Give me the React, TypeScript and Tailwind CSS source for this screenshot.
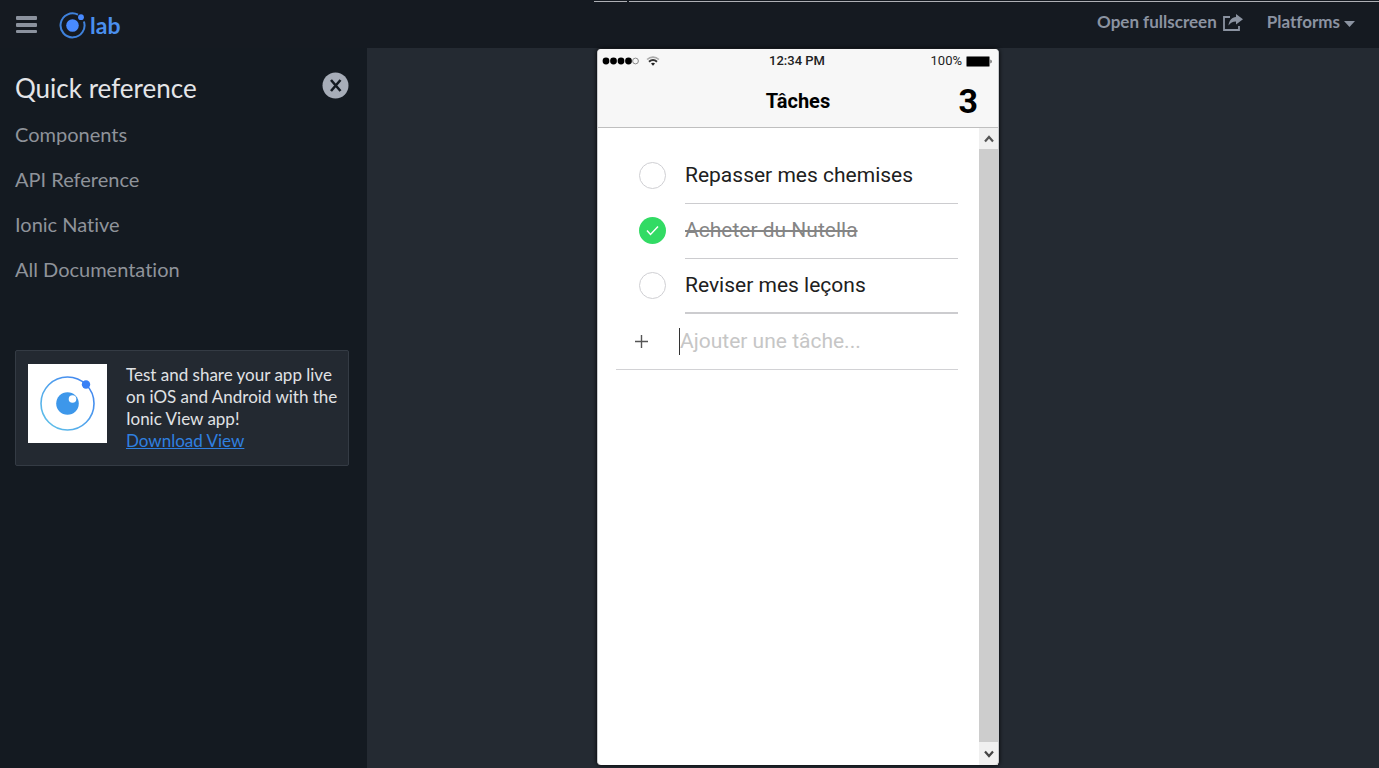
import { useState } from "react";

const links = ["Components", "API Reference", "Ionic Native", "All Documentation"];

const initialTasks = [
  { id: 1, name: "Repasser mes chemises", done: false },
  { id: 2, name: "Acheter du Nutella", done: true },
  { id: 3, name: "Reviser mes leçons", done: false },
];

function TopBar() {
  return (
    <header className="flex h-12 shrink-0 flex-col bg-[#151a21]">
      <div className="flex h-0.5 w-full shrink-0 items-end gap-0.5 pl-[43.1%]">
        <span className="h-px w-[33px] bg-[#aeb0b5]" />
        <span className="h-px flex-1 bg-[#aeb0b5]" />
      </div>
      <div className="flex flex-1 items-center pr-6 pl-4">
        <button type="button" aria-label="Menu" className="mr-[22px]">
          <svg width="21" height="18" viewBox="0 0 21 18" fill="#8b929e" className="block">
            <rect width="21" height="4" rx="1" />
            <rect y="7" width="21" height="4" rx="1" />
            <rect y="14" width="21" height="3" rx="1" />
          </svg>
        </button>
        <a href="#lab" className="flex items-center gap-1 text-[#4a8fee]">
          <svg width="27" height="27" viewBox="0 0 27 27" className="block">
            <path
              d="M19 2.700A12 12 0 1 0 24.900 9.500"
              fill="none"
              stroke="#3f82dc"
              strokeWidth="2"
            />
            <circle cx="13.5" cy="13.5" r="6.3" fill="#488aff" />
            <circle cx="22" cy="5.2" r="2.9" fill="#488aff" />
          </svg>
          <span className="text-[23px] leading-6 font-bold">lab</span>
        </a>
        <nav className="ml-auto flex items-center gap-6 pb-1.5 text-[17px] leading-5 font-bold text-[#8b93a1]">
          <a href="#fullscreen" className="flex items-center gap-1.5">
            Open fullscreen
            <svg width="20" height="17" viewBox="0 0 20 17" className="block">
              <path d="M7 3H1v13h15v-4" fill="none" stroke="currentColor" strokeWidth="1.800" />
              <path
                d="M13 0l7 5.2-7 5.3V7.4C9.500 7.400 7.500 8.600 5.500 11.500 6 6.500 8.800 3.500 13 3z"
                fill="currentColor"
              />
            </svg>
          </a>
          <button type="button" className="flex items-center gap-1">
            Platforms
            <svg width="11" height="6" viewBox="0 0 11 6" fill="currentColor" className="mt-1 block">
              <path d="M0 0h11L5.500 6z" />
            </svg>
          </button>
        </nav>
      </div>
    </header>
  );
}

function Sidebar() {
  return (
    <aside className="w-[367px] shrink-0 bg-[#141a21] pr-[18px] pl-[15px]">
      <div className="flex items-start justify-between pt-6">
        <h2 className="text-[26px] leading-8 text-[#e4e5e8]">Quick reference</h2>
        <button type="button" aria-label="Close">
          <svg width="27" height="27" viewBox="0 0 27 27" className="block">
            <circle cx="13.500" cy="13.500" r="13" fill="#a7adb8" />
            <path d="M9 8l9.500 11M18.500 8l-9.500 11" stroke="#141a21" strokeWidth="2.600" />
          </svg>
        </button>
      </div>
      <ul className="mt-2 text-[20px] leading-[45px] text-[#8f939a]">
        {links.map((label) => (
          <li key={label}>
            <a href="#docs">{label}</a>
          </li>
        ))}
      </ul>
      <section className="mt-[58px] flex h-[116px] gap-[19px] rounded-xs border border-[#343b44] bg-[#232931] pt-[13px] pl-3">
        <div className="flex size-[79px] shrink-0 items-center justify-center bg-white">
          <svg width="59" height="59" viewBox="0 0 59 59">
            <defs>
              <linearGradient id="ring" x1="0" y1="1" x2="1" y2="0">
                <stop offset="0" stopColor="#62c6e8" />
                <stop offset="1" stopColor="#3d7df0" />
              </linearGradient>
            </defs>
            <circle cx="29.500" cy="29.500" r="26.500" fill="none" stroke="url(#ring)" strokeWidth="1.600" />
            <circle cx="48" cy="10.500" r="4.200" fill="#3880f5" />
            <circle cx="29.500" cy="29.500" r="11.300" fill="#3d97ea" />
            <circle cx="34.500" cy="25" r="3.800" fill="#fff" />
          </svg>
        </div>
        <p className="text-[17px] leading-[22px] whitespace-nowrap text-[#e0e2e5]">
          Test and share your app live
          <br />
          on iOS and Android with the
          <br />
          Ionic View app!
          <br />
          <a href="#view" className="text-[#2f80e0] underline">
            Download View
          </a>
        </p>
      </section>
    </aside>
  );
}

function StatusBar() {
  return (
    <div className="flex h-6 items-center justify-between pr-1.5 pl-1 text-[13px] text-[#222]">
      <div className="flex flex-1 items-center gap-[7px]">
        <svg width="37" height="8" viewBox="0 0 37 8" fill="#000">
          <circle cx="4" cy="4" r="3.400" />
          <circle cx="11.500" cy="4" r="3.400" />
          <circle cx="19" cy="4" r="3.400" />
          <circle cx="26.500" cy="4" r="3.400" />
          <circle cx="33.500" cy="4" r="2.900" fill="none" stroke="#888" />
        </svg>
        <svg width="14" height="10" viewBox="0 0 13 10" fill="none">
          <path d="M.600 3.500C4 .200 9 .200 12.400 3.500" stroke="#aaa" strokeWidth="1.700" />
          <path d="M2.500 5.800c2.500-2.200 5.500-2.200 8 0" stroke="#333" strokeWidth="2" />
          <path d="M4.500 7.500c1.200-1 2.800-1 4 0l-2 2.300z" fill="#222" />
        </svg>
      </div>
      <span className="font-medium">12:34 PM</span>
      <div className="flex flex-1 items-center justify-end gap-1">
        <span>100%</span>
        <svg width="26" height="11" viewBox="0 0 26 11">
          <rect x=".500" y=".500" width="23" height="10" rx="1" fill="#000" stroke="#777" />
          <path d="M24.500 3.500c1.500.500 1.500 3.500 0 4z" fill="#333" />
        </svg>
      </div>
    </div>
  );
}

function Scrollbar() {
  return (
    <div className="flex w-[19px] shrink-0 flex-col bg-[#cdcdcd]">
      <button type="button" aria-label="Scroll up" className="flex h-[21px] items-center justify-center bg-[#f0f0f0]">
        <svg width="10" height="8" viewBox="0 0 10 8" fill="none" stroke="#555" strokeWidth="2.200">
          <path d="M1 6.500l4-4.500 4 4.500" />
        </svg>
      </button>
      <div className="flex-1" />
      <button
        type="button"
        aria-label="Scroll down"
        className="flex h-[23px] items-center justify-center rounded-br-sm bg-[#f0f0f0]"
      >
        <svg width="10" height="8" viewBox="0 0 10 8" fill="none" stroke="#444" strokeWidth="2.200">
          <path d="M1 1.500l4 4.500 4-4.500" />
        </svg>
      </button>
    </div>
  );
}

function Phone() {
  const [tasks, setTasks] = useState(initialTasks);
  const toggle = (id: number) =>
    setTasks(tasks.map((t) => (t.id === id ? { ...t, done: !t.done } : t)));

  return (
    <section className="flex w-[402px] flex-col rounded-sm border-x border-[#c9cbce] bg-white font-['Roboto',sans-serif] shadow-[0_0_4px_#000]">
      <div className="flex h-[79px] shrink-0 flex-col rounded-t-sm border-b border-[#bfbfbf] bg-[#f7f7f7]">
        <StatusBar />
        <div className="grid flex-1 grid-cols-3 items-center px-5 pt-0.5 text-black">
          <h1 className="col-start-2 text-center text-xl font-bold">Tâches</h1>
          <strong className="text-right text-[34px] leading-10">3</strong>
        </div>
      </div>
      <div className="flex flex-1">
        <div className="flex-1 pt-[21px] pr-[21px] pl-[18px]">
          <ul>
            {tasks.map((task) => (
              <li key={task.id} className="group">
                <label className="flex h-[55px] pl-[23px]">
                  <input
                    type="checkbox"
                    checked={task.done}
                    onChange={() => toggle(task.id)}
                    className="sr-only"
                  />
                  <span
                    className={
                      task.done
                        ? "mt-[13px] flex size-[27px] items-center justify-center rounded-full bg-[#32db64]"
                        : "mt-[13px] size-[27px] rounded-full border border-[#cfcfd3]"
                    }
                  >
                    {task.done && (
                      <svg width="13" height="11" viewBox="0 0 13 11" fill="none" stroke="#fff" strokeWidth="1.500">
                        <path d="M1 5.500l3.500 4L12 1.500" />
                      </svg>
                    )}
                  </span>
                  <span className="ml-[19px] flex flex-1 items-center border-b border-[#cccccf] text-[21px] group-last:border-b-2">
                    <span className={task.done ? "text-[#858585] line-through decoration-2" : "text-[#202020]"}>
                      {task.name}
                    </span>
                  </span>
                </label>
              </li>
            ))}
          </ul>
          <div className="flex h-14 items-center border-b border-[#d2d2d5] pl-[19px]">
            <button type="button" aria-label="Ajouter">
              <svg width="13" height="13" viewBox="0 0 13 13" stroke="#555" strokeWidth="1.400" className="block">
                <path d="M6.500 0v13M0 6.500h13" />
              </svg>
            </button>
            <span className="ml-[31px] h-[27px] w-px bg-[#333]" />
            <input
              type="text"
              aria-label="Nouvelle tâche"
              placeholder="Ajouter une tâche..."
              className="min-w-0 flex-1 bg-transparent text-[21px] outline-none placeholder:text-[#c6c6c6]"
            />
          </div>
        </div>
        <Scrollbar />
      </div>
    </section>
  );
}

export default function App() {
  return (
    <div className="flex min-h-screen flex-col bg-[#242a32] font-['Lato',sans-serif] [font-variant-ligatures:none]">
      <TopBar />
      <div className="flex flex-1">
        <Sidebar />
        <main className="flex flex-1 justify-center pt-px pr-[150px] pb-[3px]">
          <Phone />
        </main>
      </div>
    </div>
  );
}
